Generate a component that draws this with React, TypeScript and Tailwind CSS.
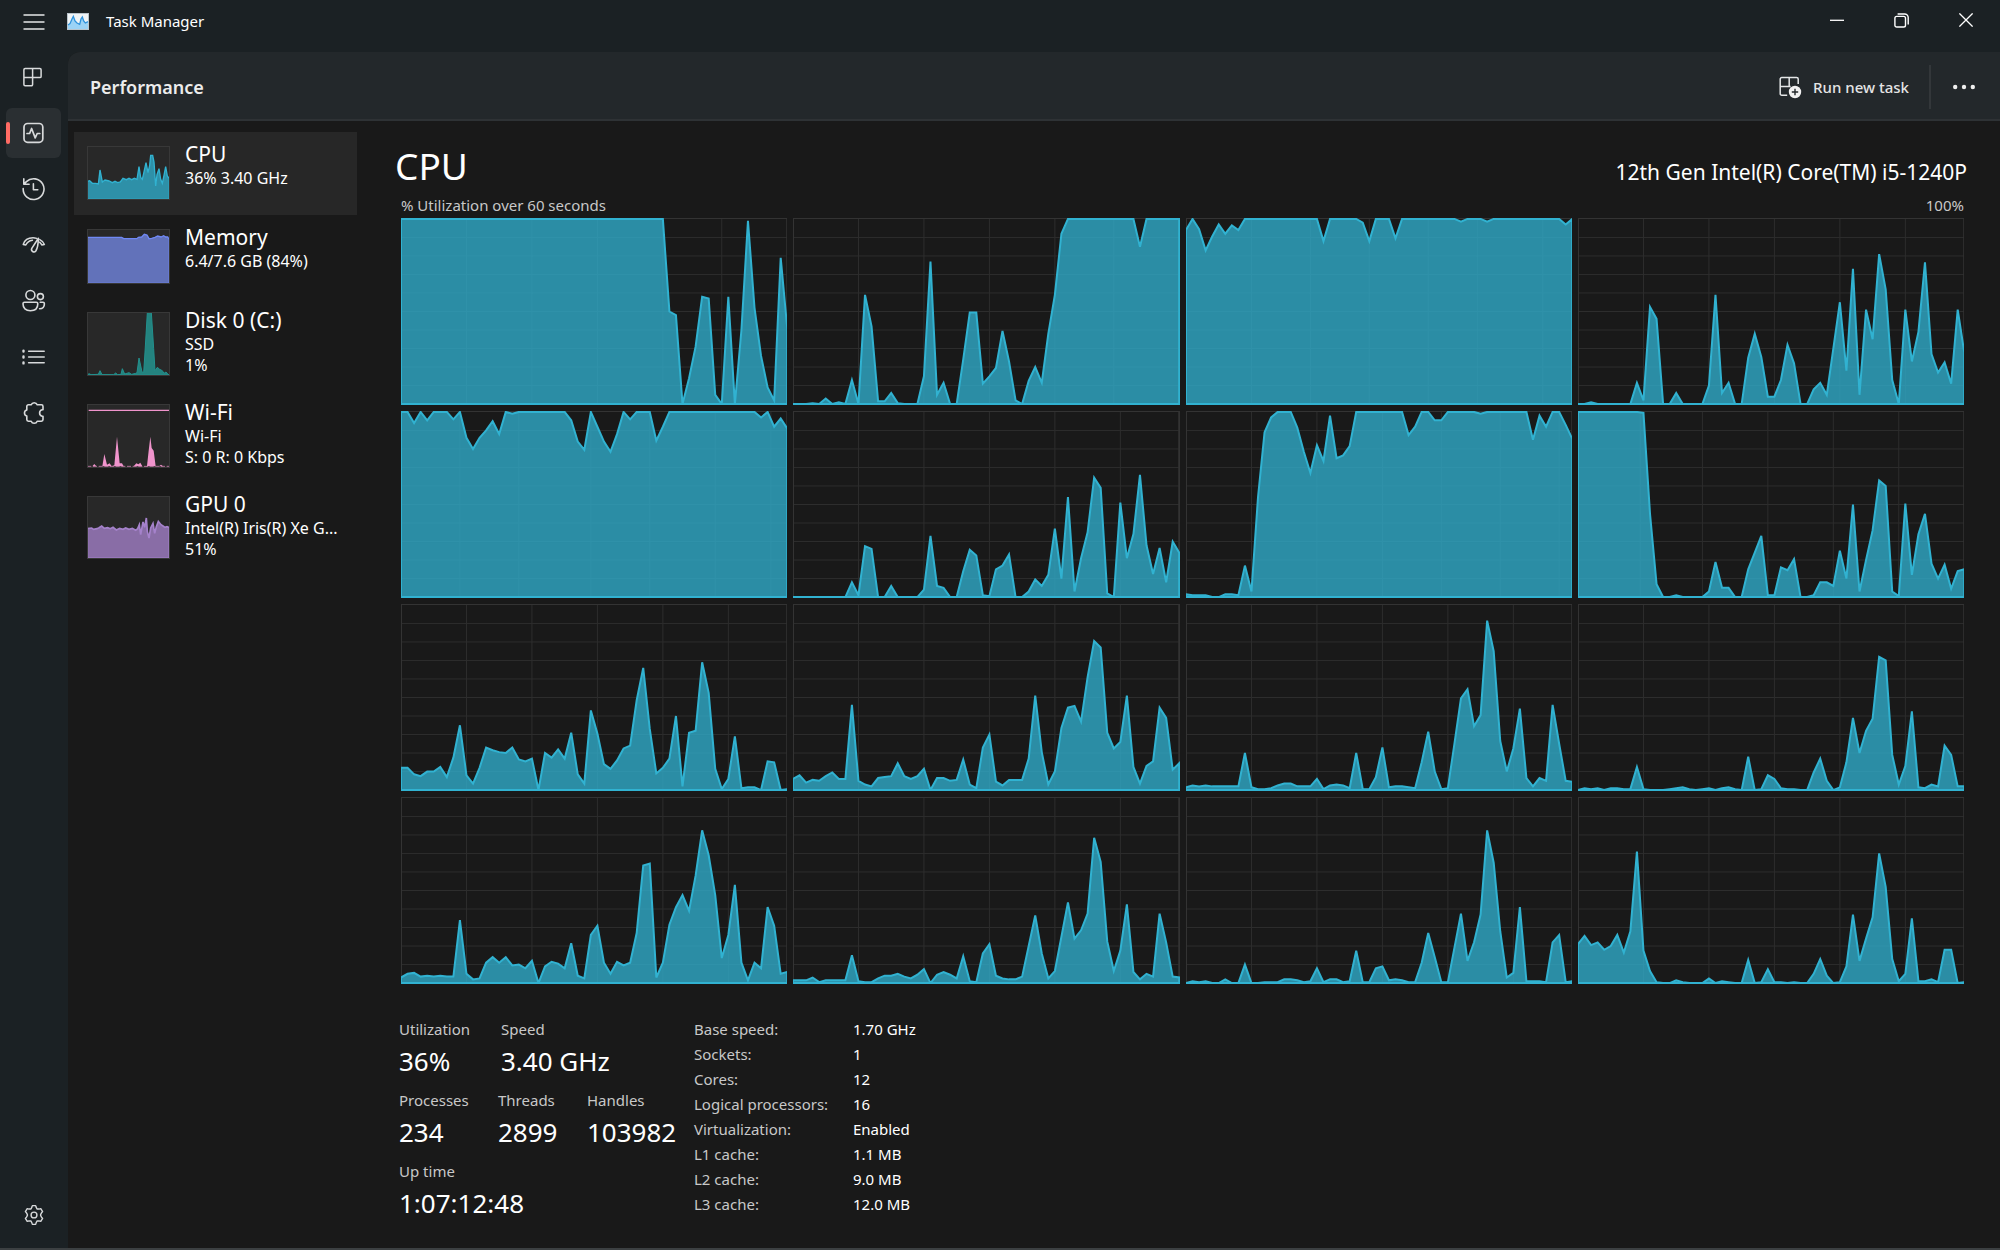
import type { ReactNode } from "react";

type CoreSeries = { data: number[]; grid: number[] };

const EVEN_GRID = [10, 20, 30, 40, 50];
const full = (count: number): number[] => Array(count).fill(100);
const idle = (count: number): number[] => Array(count).fill(0);

/* One series per logical processor: 60 samples, percent busy. */
const CORES: CoreSeries[] = [
  {
    grid: [10, 20, 30, 40, 49],
    data: [...full(41), 50, 48, 0, 14, 31, 58, 57, 5, 0, 58, 0, 40, 99, 52, 26, 9, 2, 79, 41],
  },
  {
    grid: [10, 20, 30, 40, 49],
    data: [0, 0, 0, 0.5, 0, 3, 0, 1, 0, 13, 0, 59, 42, 1.5, 1.5, 6, 0.5, 0, 0, 0, 15, 77, 5, 11.5, 0, 0, 24, 49.5, 49.5, 11, 15, 19.5, 39.5, 23, 2, 0, 12.5, 20, 11.5, 38, 59, 92, ...full(11), 85, ...full(6)],
  },
  {
    grid: [10, 19, 28, 37, 44.5, 54.5],
    data: [94, 100, 94.5, 83, 90.5, 97, 92, 96.5, 94, ...full(12), 88, ...full(5), 98, 88, 100, 100, 100, 89.5, ...full(9), 98.5, 100, 100, 100, 98.5, ...full(11), 97, 100],
  },
  {
    grid: EVEN_GRID,
    data: [0, 0, 1, ...idle(6), 11.5, 2, 52.5, 46, 0, 0, 6, 0, 0, 0, 0, 10, 59, 6, 11.5, 0, 0, 25, 38, 25.5, 4, 4, 13, 32, 22, 0, 0, 8, 11.5, 5, 30, 55, 18, 73, 5, 51, 35, 81, 62, 13, 0, 51, 23, 39, 76.5, 27, 17, 22.5, 11, 51, 28],
  },
  {
    grid: [9, 18, 29, 38, 48, 56.5],
    data: [100, 100, 94, 100, 95.5, 100, 100, 100, 96, 100, 86, 80, 86, 90, 95, 88, 100, 99, ...full(8), 95.5, 84, 79.5, 100, 92, 84, 78.5, 88, 100, 96, 100, 100, 100, 84.5, 92, ...full(14), 97, 100, 92, 96.5, 91],
  },
  {
    grid: EVEN_GRID,
    data: [...idle(9), 8, 1, 27.5, 26, 0, 0, 6, 0, 0, 0, 0, 4, 33, 6, 5, 0, 0, 14, 25.5, 22.5, 1, 0.5, 15, 17, 23, 0, 0, 3, 9.5, 6, 12, 37, 10, 54, 3, 21, 35, 64.5, 59, 2, 0, 51, 21, 34, 66, 28, 12.5, 26.5, 8, 30, 24],
  },
  {
    grid: [10, 20, 30, 39, 48, 57],
    data: [1.5, 1, 1, 1, 0, 0, 1.5, 1.5, 1, 17, 3, 54, 89, 97, 100, 100, 100, 91.5, 78.5, 67, 82, 73.5, 98, 75, 76.5, 81.5, ...full(8), 87.5, 92, 100, 100, 95.5, 95.5, ...full(5), 99, ...full(7), 85, 98, 92, 100, 100, 93, 85.5],
  },
  {
    grid: [9.5, 19, 29, 39, 49],
    data: [...full(10), 99.5, 45, 7, 0, 0, 1, 0, 0, 0, 0, 3, 19, 5, 5, 0, 0, 15, 24, 33, 1, 1, 16, 14.5, 20.5, 0, 0, 1, 8, 8, 6, 25, 10, 50, 3, 20, 36, 63, 60, 3, 0.5, 50.5, 12, 34, 45, 18, 10, 17.5, 4.5, 14, 15],
  },
  {
    grid: EVEN_GRID,
    data: [12, 12, 8.5, 7.5, 10, 10, 12.5, 7, 17.5, 35, 8, 3.5, 12, 23, 21.5, 20.5, 20, 23, 16.5, 15.5, 17, 0, 20, 17.5, 22, 17, 31, 8.5, 3.5, 43, 30.5, 14, 11.5, 16, 22.5, 24, 48.5, 66, 33, 9, 12, 17, 40, 2, 31, 32, 69, 52.5, 11.5, 0.5, 6, 29, 1, 1.5, 1.5, 0, 15.5, 15, 0, 0.5],
  },
  {
    grid: EVEN_GRID,
    data: [6, 8, 4, 5.5, 5, 7.5, 9.5, 6, 6, 46, 5, 3, 2, 6.5, 7, 7.5, 14.5, 7.5, 6, 7.5, 11.5, 0, 6.5, 6.5, 5, 5.5, 16.5, 3, 1, 23, 30, 4.5, 2.5, 5.5, 5.5, 5.5, 17, 51, 20.5, 3, 10, 33.5, 44.5, 45.5, 37, 61, 80.5, 77, 31, 22.5, 26, 51, 12.5, 3.5, 13, 15.5, 44.5, 39, 11, 14.5],
  },
  {
    grid: EVEN_GRID,
    data: [1.5, 2.5, 2, 2.5, 2, 2, 2, 2, 2, 20, 1.5, 0.5, 0.5, 1, 2.5, 3.5, 3.5, 2, 2, 2, 6, 0.5, 2.5, 3, 2.5, 1, 20, 0.5, 0.5, 7, 23, 1.5, 2, 2, 1.5, 1, 15, 31.5, 10, 0.5, 1, 25, 49.5, 54.5, 34.5, 40.5, 91.5, 75, 26.5, 10, 22.5, 44, 6.5, 2, 6.5, 5, 46, 25, 5, 4.5],
  },
  {
    grid: EVEN_GRID,
    data: [0, 1, 0.5, 1, 0, 1, 1, 0.5, 0.5, 12.5, 0.5, 0, 0, 0, 0.5, 1, 1.5, 0.5, 0, 0.5, 1, 0, 1, 1.5, 0.5, 0, 18, 0, 0.5, 8, 6, 1, 0.5, 0.5, 0, 0, 9.5, 17, 5, 0, 1.5, 15, 39, 20, 32, 38.5, 72, 70, 19, 3, 13, 42.5, 1.5, 1, 3, 2, 24, 19, 2, 2],
  },
  {
    grid: EVEN_GRID,
    data: [3, 5, 5.5, 3.5, 4, 3.5, 4, 3.5, 3.5, 34, 5, 2, 2.5, 11, 14, 11, 14, 9.5, 10, 8, 12, 0, 9, 11.5, 10.5, 8, 21.5, 4, 2.5, 26, 31, 11, 5, 11.5, 9.5, 11, 27, 63.5, 64.5, 3, 11, 31.5, 41, 47.5, 39, 58, 82.5, 69, 47.5, 13.5, 26, 53, 11, 1.5, 11, 8, 41, 31, 5, 6],
  },
  {
    grid: EVEN_GRID,
    data: [1.5, 1.5, 1.5, 3, 0.5, 1.5, 1.5, 1.5, 1.5, 15, 1, 0.5, 0.5, 2.5, 4, 4, 5, 3.5, 2.5, 4.5, 7.5, 0, 4.5, 6, 4.5, 2.5, 14.5, 1, 0.5, 16, 21, 4, 2.5, 2, 2, 3.5, 20, 36.5, 16, 2.5, 6.5, 25, 43.5, 24, 28.5, 37.5, 78.5, 65.5, 22.5, 6.5, 17.5, 42.5, 6, 2, 5, 3.5, 37.5, 22, 3.5, 3],
  },
  {
    grid: EVEN_GRID,
    data: [0, 1, 0.5, 1, 0, 0, 2, 0, 0, 10, 0, 0, 0.5, 0.5, 0.5, 2, 2, 1.5, 0.5, 1, 8, 0.5, 2, 2, 0.5, 1, 17.5, 0.5, 0.5, 8, 9, 1.5, 2, 1.5, 0.5, 0.5, 11, 27, 14, 0.5, 0.5, 19, 37.5, 12, 22, 37, 82.5, 65, 28, 3, 5.5, 41, 1, 1, 1, 0.5, 22, 26, 0.5, 1],
  },
  {
    grid: EVEN_GRID,
    data: [21, 25.5, 20.5, 22, 18, 20, 26, 16.5, 28, 71, 17.5, 6.5, 0.5, 0, 0, 1.5, 0.5, 0, 0, 0, 2.5, 0, 1, 0.5, 0, 0, 12.5, 0, 0.5, 7.5, 0.5, 0.5, 0, 0.5, 0, 0, 5, 13, 4, 0, 0.5, 9, 37, 12, 24, 35.5, 70, 52, 13, 1, 5, 35, 1, 1, 2, 0.5, 18, 18, 0, 0.5],
  },
];

function CoreChart({ series, index }: { series: CoreSeries; index: number }) {
  const points = series.data.map((v, i) => `${i},${100 - v}`).join(" ");
  return (
    <svg
      role="img"
      aria-label={`Logical processor ${index}`}
      viewBox="0 -0.5 59 101"
      preserveAspectRatio="none"
      className="block h-[187px] w-full"
    >
      <g stroke="#2d2d2d" strokeWidth="1" fill="none">
        {[10, 20, 30, 40, 50, 60, 70, 80, 90].map((y) => (
          <line key={y} x1="0" x2="59" y1={y} y2={y} vectorEffect="non-scaling-stroke" />
        ))}
        {series.grid.map((x) => (
          <line key={x} x1={x} x2={x} y1="-1" y2="101" vectorEffect="non-scaling-stroke" />
        ))}
        <rect x="0" y="-0.5" width="59" height="101" stroke="#333333" strokeWidth="2" vectorEffect="non-scaling-stroke" />
      </g>
      <polygon
        points={`0,100 ${points} 59,100`}
        fill="#31b2d1"
        fillOpacity="0.76"
        stroke="#31b2d1"
        strokeWidth="2"
        vectorEffect="non-scaling-stroke"
      />
    </svg>
  );
}

/* ---------- small resource graphs ---------- */

function Thumb({ h, children }: { h: number; children: ReactNode }) {
  return (
    <svg
      viewBox={`0 0 249 ${h * 3}`}
      width="83"
      height={h}
      aria-hidden="true"
      className="mt-3.5 shrink-0 bg-[#282828] outline-1 -outline-offset-1 outline-[#383838]"
    >
      {children}
    </svg>
  );
}

const RESOURCES = [
  {
    name: "CPU",
    lines: ["36% 3.40 GHz"],
    graph: (
      <Thumb h={54}>
        <polygon
          points="1,160 1,106 8,104 16,112 26,112 34,114 39,72 46,108 54,102 66,105 76,110 84,106 92,110 100,108 108,97 118,101 126,97 134,101 142,97 150,100 156,62 161,94 166,100 171,78 177,50 183,80 188,58 191,28 197,28 201,48 206,120 210,86 216,68 221,100 226,112 231,88 236,62 241,90 247,98 247,160"
          fill="#31b2d1"
          fillOpacity="0.76"
          stroke="#31b2d1"
          strokeWidth="4"
        />
      </Thumb>
    ),
  },
  {
    name: "Memory",
    lines: ["6.4/7.6 GB (84%)"],
    graph: (
      <Thumb h={55}>
        <polygon
          points="1,163 1,25 104,25 110,29 150,29 154,25 164,24 172,16 180,18 186,29 194,28 204,25 212,21 222,24 230,20 236,24 242,24 247,32 247,163"
          fill="#7084de"
          fillOpacity="0.8"
          stroke="#7089f5"
          strokeWidth="4"
        />
      </Thumb>
    ),
  },
  {
    name: "Disk 0 (C:)",
    lines: ["SSD", "1%"],
    graph: (
      <Thumb h={64}>
        <polygon
          points="1,189 6,185 12,188 34,187 39,176 45,188 80,188 86,183 92,188 102,187 106,170 113,186 126,182 134,187 146,184 150,182 156,138 165,180 170,182 174,120 181,2 193,2 200,110 204,176 211,166 218,172 226,176 231,184 237,180 243,187 247,189"
          fill="#239a95"
          fillOpacity="0.8"
          stroke="#22918e"
          strokeWidth="3"
        />
      </Thumb>
    ),
  },
  {
    name: "Wi-Fi",
    lines: ["Wi-Fi", "S: 0 R: 0 Kbps"],
    graph: (
      <Thumb h={64}>
        <path d="M5 19H246" stroke="#f094cc" strokeWidth="4" />
        <path d="M1 187H247" stroke="#f094cc" strokeWidth="2" strokeDasharray="12 5" />
        <polygon
          points="16,187 22,180 28,187 46,187 52,150 60,182 68,178 74,187 82,184 90,98 98,178 105,178 110,187 140,187 148,178 154,181 160,176 166,187 180,186 185,140 190,98 194,132 200,140 206,187 216,187 222,182 228,187"
          fill="#f094cc"
        />
      </Thumb>
    ),
  },
  {
    name: "GPU 0",
    lines: ["Intel(R) Iris(R) Xe G...", "51%"],
    graph: (
      <Thumb h={63}>
        <polygon
          points="1,187 1,98 14,96 20,100 30,98 36,95 44,90 52,97 62,95 70,98 78,94 88,102 98,97 108,100 116,96 126,100 136,97 146,103 152,98 157,86 161,116 168,78 173,94 178,66 181,106 186,126 191,96 198,82 203,112 208,92 214,76 222,86 228,90 234,94 240,92 247,95 247,187"
          fill="#a582cb"
          fillOpacity="0.78"
          stroke="#a582cb"
          strokeWidth="5"
        />
      </Thumb>
    ),
  },
];

/* ---------- icons ---------- */

function Icon({ children, size = 24 }: { children: ReactNode; size?: number }) {
  return (
    <svg
      width={size}
      height={size}
      viewBox="0 0 24 24"
      fill="none"
      stroke="#d8dadb"
      strokeWidth="1.5"
      strokeLinecap="round"
      strokeLinejoin="round"
      aria-hidden="true"
    >
      {children}
    </svg>
  );
}

const NAV = [
  {
    label: "Processes",
    icon: (
      <Icon>
        <path d="M3.1 3.6h14.8a1.2 1.2 0 0 1 1.2 1.2v6.6a1.2 1.2 0 0 1-1.2 1.2h-7.3v7a1.2 1.2 0 0 1-1.2 1.2H3.1a1.2 1.2 0 0 1-1.2-1.2V4.8a1.2 1.2 0 0 1 1.2-1.2M10.6 3.6v9M1.9 12.6h8.7" />
      </Icon>
    ),
  },
  {
    label: "Performance",
    icon: (
      <Icon>
        <rect x="2" y="2.5" width="18.8" height="18.8" rx="3.6" strokeWidth="1.7" />
        <path d="M5 12.5h2.6l2-5 3.6 9.4 2-4.4h2.6" strokeWidth="1.7" />
      </Icon>
    ),
  },
  {
    label: "App history",
    icon: (
      <Icon>
        <path d="M1.2 11.6a10.4 10.4 0 1 0 3.2-7L2 7.1M1.8 1.9v5.4h5.3M11.4 6.8v6h4.4" strokeWidth="1.6" />
      </Icon>
    ),
  },
  {
    label: "Startup apps",
    icon: (
      <Icon>
        <path
          d="M1.2 11.4c1.2-3.8 5-6.6 9.8-6.6 1.4 0 2.4.2 3.6.6M1.2 11.4l2.6.6c1-2.3 3.2-4.2 6.6-4.7M17.8 6.6c2.4 1.2 4 2.9 4.6 4.8l-2.6.6c-.5-1.1-1.2-2-2.2-2.8"
          strokeWidth="1.5"
        />
        <path d="M16.4 5.2 9.8 15.4a2.4 2.4 0 0 0 4 2.6c1.6-2.6 2.5-7.2 2.6-12.8Z" strokeWidth="1.6" />
      </Icon>
    ),
  },
  {
    label: "Users",
    icon: (
      <Icon>
        <g strokeWidth="1.6">
          <circle cx="8.4" cy="6" r="4.5" />
          <circle cx="18.4" cy="7.6" r="3" />
          <path d="M2.5 13.3h11.8c.9 0 1.5.6 1.5 1.4 0 4.4-2.7 7-7.4 7s-7.4-2.6-7.4-7c0-.8.6-1.4 1.5-1.4ZM18.2 13.3H21c.8 0 1.4.6 1.4 1.4 0 3.2-1.7 5-4.8 5" />
        </g>
      </Icon>
    ),
  },
  {
    label: "Details",
    icon: (
      <Icon>
        <path d="M6.6 6.2h15.6M6.6 12h15.6M6.6 17.8h15.6" />
        <path d="M1.5 5.6v1M1.5 11.5v1M1.5 17.4v1" strokeWidth="2.4" />
      </Icon>
    ),
  },
  {
    label: "Services",
    icon: (
      <Icon>
        <path
          d="M9.2 3.8a3.2 3.2 0 0 1 6 0h4.2a1.6 1.6 0 0 1 1.6 1.6v3.4h-.9a3.3 3.3 0 0 0 0 6.4h.9v3.4a1.6 1.6 0 0 1-1.6 1.6h-4.2a3.2 3.2 0 0 1-6 0H6.4a1.6 1.6 0 0 1-1.6-1.6V15a3.1 3.1 0 0 1 0-6V5.4a1.6 1.6 0 0 1 1.6-1.6Z"
          strokeWidth="1.6"
        />
      </Icon>
    ),
  },
];

function SettingsIcon() {
  return (
    <Icon size={22}>
      <circle cx="12" cy="12" r="3.2" />
      <path d="M9.7 3.4 10.2 1.8h3.6l.5 1.6 1 2 2.2.1 1.9-.5 2 3.2-1.2 1.5-1 1.9v.8l1 1.9 1.2 1.5-2 3.2-1.9-.5-2.2.1-1 2-.5 1.6h-3.6l-.5-1.6-1-2-2.2-.1-1.9.5-2-3.2 1.2-1.5 1-1.9v-.8l-1-1.9-1.2-1.5 2-3.2 1.9.5 2.2-.1Z" />
    </Icon>
  );
}

function AppIcon() {
  return (
    <svg width="22" height="17" viewBox="0 0 66 51" aria-hidden="true">
      <rect width="66" height="51" fill="#b9c4cb" />
      <rect x="3" y="3" width="60" height="45" fill="#f0f4f6" />
      <path d="M3 36l6-4 6-14 4-8 5 14 6 6 8 4 4-16 4-6 4 12 5 6 8-4v22H3z" fill="#9bd3f6" />
      <path d="M3 36l6-4 6-14 4-8 5 14 6 6 8 4 4-16 4-6 4 12 5 6 8-4" fill="none" stroke="#2f93dc" strokeWidth="4" />
    </svg>
  );
}

/* ---------- page ---------- */

const DETAILS = [
  ["Base speed:", "1.70 GHz"],
  ["Sockets:", "1"],
  ["Cores:", "12"],
  ["Logical processors:", "16"],
  ["Virtualization:", "Enabled"],
  ["L1 cache:", "1.1 MB"],
  ["L2 cache:", "9.0 MB"],
  ["L3 cache:", "12.0 MB"],
];

function Stat({ label, value, className = "" }: { label: string; value: string; className?: string }) {
  return (
    <div className={`mb-[7px] ${className}`}>
      <dt className="text-[15px] leading-5 text-[#c8c8c8]">{label}</dt>
      <dd className="text-[26px] leading-[44px] text-white">{value}</dd>
    </div>
  );
}

export default function App() {
  return (
    <div className="flex min-h-screen flex-col border-b-2 border-[#3c4042] bg-[#1b2124] font-['Noto_Sans','Open_Sans',sans-serif] text-white">
      <header className="flex h-[52px] items-start">
        <button aria-label="Toggle navigation" className="flex h-[44px] w-[67px] items-center justify-center">
          <svg width="22" height="16" viewBox="0 0 22 16" stroke="#e6e8e8" strokeWidth="1.4" aria-hidden="true">
            <path d="M0.5 1h21M0.5 8h21M0.5 15h21" />
          </svg>
        </button>
        <div className="flex h-[42px] items-center">
          <AppIcon />
          <h1 className="pl-[17px] text-[15px] leading-5">Task Manager</h1>
        </div>
        <div className="ml-auto flex h-10 items-center pr-px">
          <button aria-label="Minimize" className="flex h-10 w-16 items-center justify-center">
            <svg width="14" height="14" viewBox="0 0 14 14" stroke="#fff" strokeWidth="1.3" aria-hidden="true">
              <path d="M0 7.3h14" />
            </svg>
          </button>
          <button aria-label="Restore" className="flex h-10 w-16 items-center justify-center">
            <svg width="15" height="15" viewBox="0 0 15 15" fill="none" stroke="#fff" strokeWidth="1.4" aria-hidden="true">
              <rect x="0.9" y="3.4" width="10.6" height="10.6" rx="1.8" />
              <path d="M3.6 1h7a3.6 3.6 0 0 1 3.6 3.6v7" />
            </svg>
          </button>
          <button aria-label="Close" className="flex h-10 w-[66px] items-center justify-center">
            <svg width="14" height="14" viewBox="0 0 14 14" stroke="#fff" strokeWidth="1.3" aria-hidden="true">
              <path d="M0.4 0.4l13.2 13.2M13.6 0.4L0.4 13.6" />
            </svg>
          </button>
        </div>
      </header>

      <div className="flex flex-1">
        <nav aria-label="Pages" className="flex w-[68px] shrink-0 flex-col items-start gap-1.5 pb-2 pl-1.5">
          {NAV.map(({ label, icon }) => {
            const current = label === "Performance";
            return (
              <button
                key={label}
                aria-label={label}
                aria-current={current ? "page" : undefined}
                className={`flex h-[50px] w-[55px] items-center rounded-md ${current ? "bg-[#2a2f32]" : ""}`}
              >
                <span className={`h-[22px] w-1 rounded-full ${current ? "bg-[#ff6b64]" : ""}`} />
                <span className="pl-3">{icon}</span>
              </button>
            );
          })}
          <button aria-label="Settings" className="mt-auto flex h-[50px] w-[55px] items-center justify-center">
            <SettingsIcon />
          </button>
        </nav>

        <div className="flex min-w-0 flex-1 flex-col overflow-hidden rounded-tl-xl bg-[#191919]">
          <div className="flex h-[69px] items-center border-b-2 border-[#2e3235] bg-[#23282b] pl-[22px] pt-[3px]">
            <h2 className="text-[18px] font-semibold text-[#ececec]">Performance</h2>
            <button className="ml-auto flex items-center gap-[11px] text-[15px] font-medium text-[#e4e4e4]">
              <svg width="24" height="24" viewBox="0 0 24 24" fill="none" stroke="#e4e6e7" strokeWidth="1.5" aria-hidden="true">
                <path d="M9.2 20.3H3.8a1.6 1.6 0 0 1-1.6-1.6V4.1a1.6 1.6 0 0 1 1.6-1.6h14.8a1.6 1.6 0 0 1 1.6 1.6v5M11.2 2.5v9M2.2 11.4h9M11.2 11.4h1.4" />
                <circle cx="17" cy="17" r="6.2" fill="#f2f2f2" stroke="none" />
                <path d="M17 13.8v6.4M13.8 17h6.4" stroke="#23282b" strokeWidth="1.4" />
              </svg>
              Run new task
            </button>
            <div className="ml-5 h-11 w-0.5 bg-[#33373a]" />
            <button aria-label="More options" className="flex h-11 w-[69px] items-center justify-center pr-1">
              <svg width="24" height="6" viewBox="0 0 24 6" fill="#eee" aria-hidden="true">
                <circle cx="3.2" cy="3" r="2.2" />
                <circle cx="12" cy="3" r="2.2" />
                <circle cx="20.8" cy="3" r="2.2" />
              </svg>
            </button>
          </div>

          <div className="flex flex-1">
            <aside className="w-[289px] shrink-0 pl-1.5 pt-[11px]">
              {RESOURCES.map(({ name, lines, graph }) => (
                <button
                  key={name}
                  className={`flex w-full items-start gap-[15px] pl-[13px] text-left ${
                    lines.length > 1 ? "h-[92px]" : "h-[83px]"
                  } ${name === "CPU" ? "bg-[#272727]" : ""}`}
                >
                  {graph}
                  <span className="block min-w-0 pt-[9px]">
                    <span className="block text-[21px] leading-[27px]">{name}</span>
                    {lines.map((line) => (
                      <span key={line} className="block text-[16px] leading-[21px]">
                        {line}
                      </span>
                    ))}
                  </span>
                </button>
              ))}
            </aside>

            <main className="min-w-0 flex-1 pb-2 pt-[21px]">
              <div className="flex h-12 items-baseline justify-between pl-[38px] pr-[33px]">
                <h3 className="text-[37px] leading-[48px]">CPU</h3>
                <p className="text-[21px]">12th Gen Intel(R) Core(TM) i5-1240P</p>
              </div>
              <div className="flex justify-between pb-[3px] pl-[44px] pr-[36px] pt-[5px] text-[15px] leading-5 text-[#c8c8c8]">
                <span>% Utilization over 60 seconds</span>
                <span>100%</span>
              </div>
              <div className="grid grid-cols-4 gap-1.5 pl-[44px] pr-[36px]">
                {CORES.map((series, i) => (
                  <CoreChart key={i} series={series} index={i} />
                ))}
              </div>

              <div className="flex pl-[42px] pt-[35px]">
                <dl className="w-[295px]">
                  <div className="flex">
                    <Stat label="Utilization" value="36%" className="w-[102px]" />
                    <Stat label="Speed" value="3.40 GHz" />
                  </div>
                  <div className="flex">
                    <Stat label="Processes" value="234" className="w-[99px]" />
                    <Stat label="Threads" value="2899" className="w-[89px]" />
                    <Stat label="Handles" value="103982" />
                  </div>
                  <Stat label="Up time" value="1:07:12:48" />
                </dl>
                <table className="-mt-0.5 self-start text-left text-[15px] leading-[25px]">
                  <tbody>
                    {DETAILS.map(([label, value]) => (
                      <tr key={label}>
                        <th scope="row" className="w-[159px] p-0 font-normal text-[#c8c8c8]">
                          {label}
                        </th>
                        <td className="p-0">{value}</td>
                      </tr>
                    ))}
                  </tbody>
                </table>
              </div>
            </main>
          </div>
        </div>
      </div>
    </div>
  );
}
